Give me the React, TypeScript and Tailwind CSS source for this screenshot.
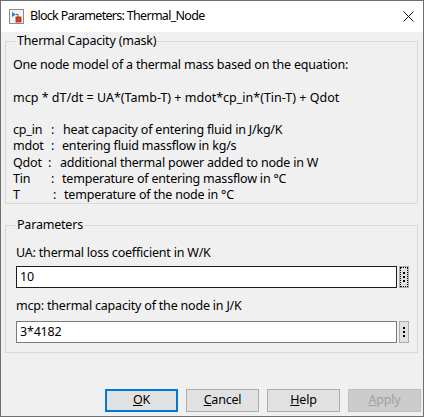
import React from "react";

const BlockIcon = () => (
  <svg width="15" height="15" viewBox="0 0 15 15">
    <rect x="0.5" y="0.5" width="14" height="14" fill="#f4f4f4" stroke="#8a8a8a" />
    <path d="M3 3 L7 5.5 L3 8 Z" fill="#2f7fd0" />
    <path d="M7 5.5 H9 V8" stroke="#555" strokeWidth="1" fill="none" />
    <rect x="7" y="8" width="5" height="5" fill="#e2421a" stroke="#9c2a10" strokeWidth="0.8" />
  </svg>
);

const DotsButton = ({ focused }: { focused?: boolean }) => (
  <div className="w-[10px] h-[22px] border border-[#adadad] bg-[#e1e1e1] flex items-center justify-center">
    <div
      className={`w-full h-full flex flex-col items-center justify-center gap-[2px] ${
        focused ? "border border-dotted border-black" : ""
      }`}
    >
      <span className="w-[2px] h-[2px] bg-black" />
      <span className="w-[2px] h-[2px] bg-black" />
      <span className="w-[2px] h-[2px] bg-black" />
    </div>
  </div>
);

// name, colon x, text x (absolute x in window)
const vars: [string, number, number, string][] = [
  ["cp_in", 51, 63, "heat capacity of entering fluid in J/kg/K"],
  ["mdot", 51, 62, "entering fluid massflow in kg/s"],
  ["Qdot", 48, 60, "additional thermal power added to node in W"],
  ["Tin", 51, 62, "temperature of entering massflow in °C"],
  ["T", 53, 64, "temperature of the node in °C"],
];

export default function App() {
  return (
    <div className="w-[424px] h-[417px] border border-[#707070] bg-[#f0f0f0] flex flex-col text-[12.5px] tracking-[-0.2px] text-black font-['Noto_Sans',sans-serif] overflow-hidden">
      <div className="h-[31px] shrink-0 bg-white flex items-center pl-[8px] pr-[9px]">
        <BlockIcon />
        <span className="ml-[6px] text-[12.5px] tracking-[-0.7px]">Block Parameters: Thermal_Node</span>
        <svg className="ml-auto" width="11" height="11" viewBox="0 0 11 11">
          <path d="M0.5 0.5 L10.5 10.5 M10.5 0.5 L0.5 10.5" stroke="#111" strokeWidth="1" />
        </svg>
      </div>

      <div className="flex-1 flex flex-col pl-[4px] pr-[5px]">
        <fieldset className="mt-[1px] border border-[#d9d9d9] pl-[7px] pr-[6px] pb-0">
          <legend className="ml-[3px] px-[1px] leading-[16px]">Thermal Capacity (mask)</legend>
          <div className="mt-[8px] leading-[16.25px]">
            <div>One node model of a thermal mass based on the equation:</div>
            <div className="mt-[16.25px] tracking-normal">mcp * dT/dt = UA*(Tamb-T) + mdot*cp_in*(Tin-T) + Qdot</div>
            <div className="mt-[16.25px]">
              {vars.map(([name, cx, tx, text]) => (
                <div key={name} className="flex whitespace-nowrap">
                  <span style={{ width: cx - 13 }}>{name}</span>
                  <span style={{ width: tx - cx }}>:</span>
                  <span>{text}</span>
                </div>
              ))}
            </div>
          </div>
        </fieldset>

        <fieldset className="mt-[13px] border border-[#d9d9d9] pl-[10px] pr-[8px] pb-[9px]">
          <legend className="px-[1px] leading-[16px]">Parameters</legend>
          <div className="mt-[12px] leading-[16px]">UA: thermal loss coefficient in W/K</div>
          <div className="mt-[5px] flex items-center gap-[2px]">
            <div className="flex-1 h-[22px] border border-[#1a1a1a] bg-white flex items-center px-[3px]">10</div>
            <DotsButton focused />
          </div>
          <div className="mt-[10px] leading-[16px]">mcp: thermal capacity of the node in J/K</div>
          <div className="mt-[7px] flex items-center gap-[2px]">
            <div className="flex-1 h-[22px] border border-[#7a7a7a] bg-white flex items-center px-[3px]">3*4182</div>
            <DotsButton />
          </div>
        </fieldset>

        <div className="mt-auto mb-[4px] mr-[-3px] flex justify-end gap-[8px]">
          <button className="w-[73px] h-[23px] border-2 border-[#0078d7] bg-[#e1e1e1]">
            <span className="underline">O</span>K
          </button>
          <button className="w-[73px] h-[23px] border border-[#adadad] bg-[#e1e1e1]">
            <span className="underline">C</span>ancel
          </button>
          <button className="w-[73px] h-[23px] border border-[#adadad] bg-[#e1e1e1]">
            <span className="underline">H</span>elp
          </button>
          <button className="w-[73px] h-[23px] border border-[#bfbfbf] bg-[#cccccc] text-[#a0a0a0]">
            <span className="underline">A</span>pply
          </button>
        </div>
      </div>
    </div>
  );
}
